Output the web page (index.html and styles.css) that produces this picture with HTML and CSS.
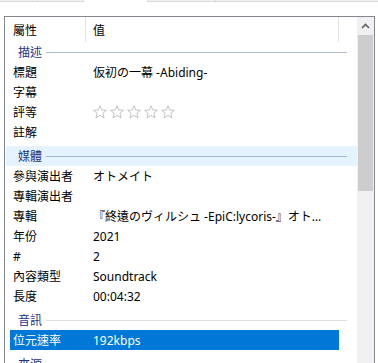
FILE: index.html
```html
<!DOCTYPE html>
<html lang="zh-Hant">
<head>
    <meta charset="UTF-8">
    <title>內容 - 詳細資料</title>
    <link rel="stylesheet" href="styles.css">
</head>
<body>
    <div class="tabs">
        <div class="tab tab-a"></div>
        <div class="tab tab-b"></div>
        <div class="tab active"></div>
        <div class="tab tab-c"></div>
        <div class="tab tab-d"></div>
    </div>

    <div class="listbox">
        <div class="list">
            <div class="head">
                <div class="hcol hname">屬性</div>
                <div class="hcol hval">值</div>
                <div class="hcol hrest"></div>
            </div>

            <!-- 描述 -->
            <div class="group first"><span>描述</span><i class="rule"></i></div>
            <div class="row"><div class="name">標題</div><div class="val">仮初の一幕 -Abiding-</div></div>
            <div class="row"><div class="name">字幕</div><div class="val"></div></div>
            <div class="row">
                <div class="name">評等</div>
                <div class="val stars">
                    <svg viewBox="0 0 14 14"><path d="M7 0.8 8.8 5 13.4 5.3 9.9 8.3 11 12.9 7 10.4 3 12.9 4.1 8.3 0.6 5.3 5.2 5Z"/></svg>
                    <svg viewBox="0 0 14 14"><path d="M7 0.8 8.8 5 13.4 5.3 9.9 8.3 11 12.9 7 10.4 3 12.9 4.1 8.3 0.6 5.3 5.2 5Z"/></svg>
                    <svg viewBox="0 0 14 14"><path d="M7 0.8 8.8 5 13.4 5.3 9.9 8.3 11 12.9 7 10.4 3 12.9 4.1 8.3 0.6 5.3 5.2 5Z"/></svg>
                    <svg viewBox="0 0 14 14"><path d="M7 0.8 8.8 5 13.4 5.3 9.9 8.3 11 12.9 7 10.4 3 12.9 4.1 8.3 0.6 5.3 5.2 5Z"/></svg>
                    <svg viewBox="0 0 14 14"><path d="M7 0.8 8.8 5 13.4 5.3 9.9 8.3 11 12.9 7 10.4 3 12.9 4.1 8.3 0.6 5.3 5.2 5Z"/></svg>
                </div>
            </div>
            <div class="row"><div class="name">註解</div><div class="val"></div></div>

            <!-- 媒體 -->
            <div class="group hover"><span>媒體</span><i class="rule"></i></div>
            <div class="row"><div class="name">參與演出者</div><div class="val">オトメイト</div></div>
            <div class="row"><div class="name">專輯演出者</div><div class="val"></div></div>
            <div class="row"><div class="name">專輯</div><div class="val">『終遠のヴィルシュ -EpiC:lycoris-』オトメイト</div></div>
            <div class="row"><div class="name">年份</div><div class="val">2021</div></div>
            <div class="row"><div class="name">#</div><div class="val">2</div></div>
            <div class="row"><div class="name">內容類型</div><div class="val">Soundtrack</div></div>
            <div class="row"><div class="name">長度</div><div class="val">00:04:32</div></div>

            <!-- 音訊 -->
            <div class="group faint"><span>音訊</span><i class="rule"></i></div>
            <div class="row selected"><div class="name">位元速率</div><div class="val">192kbps</div></div>

            <!-- 來源 -->
            <div class="group"><span>來源</span><i class="rule"></i></div>
        </div>

        <div class="scrollbar">
            <div class="sb-btn">
                <svg viewBox="0 0 9 6"><path d="M1 5 4.5 1.5 8 5"/></svg>
            </div>
            <div class="sb-thumb"></div>
        </div>
    </div>
</body>
</html>
```

FILE: styles.css
```css
* {
    margin: 0;
    padding: 0;
    box-sizing: border-box;
}

body {
    background: #fff;
    font-family: "Segoe UI", "Noto Sans", "Noto Sans CJK TC", sans-serif;
    font-size: 12px;
    color: #000;
    overflow: hidden;
}

/* Tab strip (bottom edge only) */
.tabs {
    display: flex;
    height: 2px;
}

.tab {
    height: 2px;
    background: #f0f0f0;
    border-bottom: 1px solid #d9d9d9;
    border-right: 1px solid #d9d9d9;
}

.tab-a { width: 38px; }
.tab-b { width: 46px; }
.tab.active { width: 63px; background: #fff; border: none; }
.tab-c { width: 69px; border-left: 1px solid #d9d9d9; }
.tab-d { flex: 1; border-right: none; }

/* List box */
.listbox {
    display: flex;
    margin: 14px 0 0 4px;
    width: 371px;
    height: 400px;
    border: 1px solid #828790;
}

.list {
    flex: 1;
    overflow: hidden;
}

.head {
    display: flex;
    height: 25px;
}

.hcol {
    display: flex;
    align-items: center;
    border-right: 1px solid #e5e5e5;
}

.hname { width: 81px; padding-left: 8px; }
.hval { width: 253px; padding-left: 7px; }
.hrest { flex: 1; border-right: none; }

/* Group headers */
.group {
    display: flex;
    align-items: center;
    height: 20px;
    margin: 4px 0 0 1px;
    padding: 0 10px 0 12px;
    color: #1e3287;
}

.group.first { margin-top: 0; }
.group.hover { background: #e5f3ff; }

.rule {
    flex: 1;
    height: 1px;
    margin-left: 4px;
    background: #b3bdcf;
}

.group.hover .rule { background: #a5b7d2; }
.group.faint .rule { background: #dce1e6; }

/* Property rows */
.row {
    display: flex;
    align-items: center;
    height: 20px;
    width: 329px;
    margin-left: 5px;
}

.row .name {
    width: 75px;
    padding-left: 3px;
    white-space: nowrap;
}

.row .val {
    flex: 1;
    min-width: 0;
    padding: 0 7px 0 8px;
    white-space: nowrap;
    overflow: hidden;
    text-overflow: ellipsis;
}

.row.selected {
    background: #0078d7;
    color: #fff;
}

.stars {
    display: flex;
    gap: 3px;
}

.stars svg {
    width: 14px;
    height: 14px;
    fill: none;
    stroke: #c2c2c2;
    stroke-width: 1;
    stroke-linejoin: miter;
}

/* Scrollbar */
.scrollbar {
    width: 17px;
    background: #f0f0f0;
    padding: 0 1px;
}

.sb-btn {
    height: 17px;
    display: flex;
    align-items: center;
    justify-content: center;
}

.sb-btn svg {
    width: 9px;
    height: 6px;
    fill: none;
    stroke: #606060;
    stroke-width: 1.6;
}

.sb-thumb {
    height: 156px;
    margin-top: 1px;
    background: #cdcdcd;
}
```
